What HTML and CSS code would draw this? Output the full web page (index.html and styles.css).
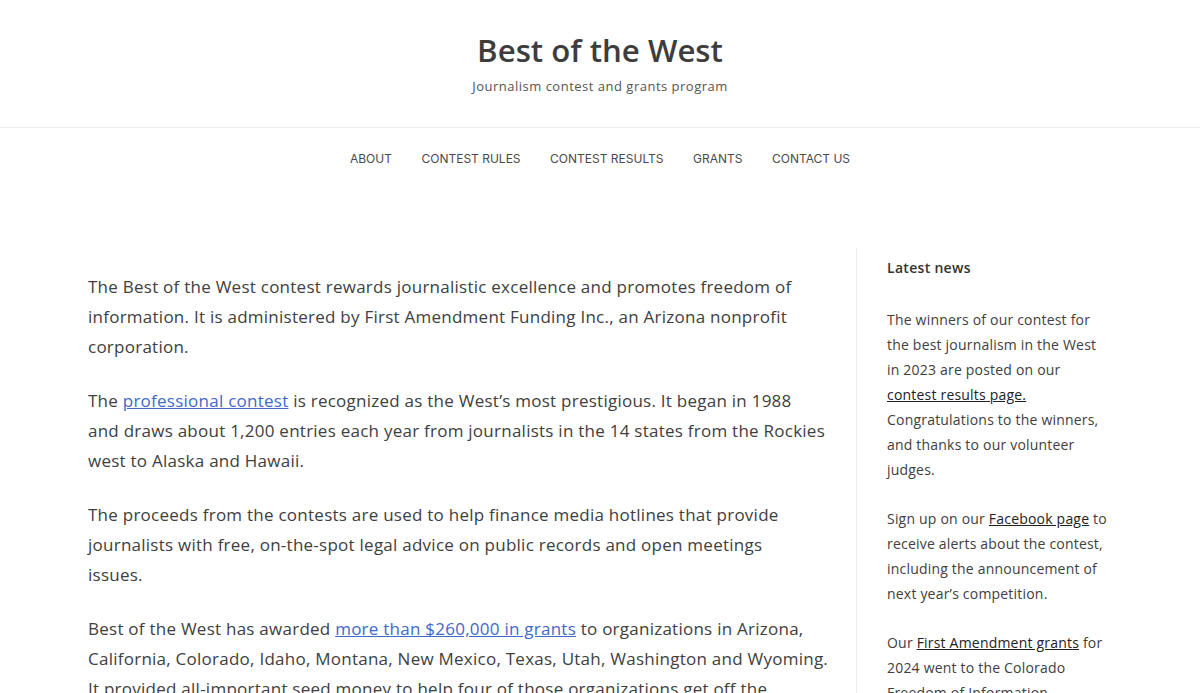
FILE: index.html
```html
<!DOCTYPE html>
<html lang="en">
<head>
<meta charset="utf-8">
<title>Best of the West</title>
<link rel="stylesheet" href="styles.css">
</head>
<body>
<header class="site-header">
  <h1 class="site-title">Best of the West</h1>
  <p class="site-tagline">Journalism contest and grants program</p>
</header>
<nav class="site-nav">
  <a href="#">About</a>
  <a href="#">Contest Rules</a>
  <a href="#">Contest Results</a>
  <a href="#">Grants</a>
  <a href="#">Contact Us</a>
</nav>
<div class="layout">
  <main class="content">
    <p>The Best of the West contest rewards journalistic excellence and promotes freedom of<br>information. It is administered by First Amendment Funding Inc., an Arizona nonprofit<br>corporation.</p>
    <p>The <a href="#">professional contest</a> is recognized as the West’s most prestigious. It began in 1988<br>and draws about 1,200 entries each year from journalists in the 14 states from the Rockies<br>west to Alaska and Hawaii.</p>
    <p>The proceeds from the contests are used to help finance media hotlines that provide<br>journalists with free, on-the-spot legal advice on public records and open meetings<br>issues.</p>
    <p>Best of the West has awarded <a href="#">more than $260,000 in grants</a> to organizations in Arizona,<br>California, Colorado, Idaho, Montana, New Mexico, Texas, Utah, Washington and Wyoming.<br>It provided all-important seed money to help four of those organizations get off the<br>ground.</p>
  </main>
  <aside class="sidebar">
    <h2 class="widget-title">Latest news</h2>
    <p>The winners of our contest for the best journalism in the West in 2023 are posted on our <a href="#">contest results page.</a> Congratulations to the winners, and thanks to our volunteer judges.</p>
    <p>Sign up on our <a href="#">Facebook page</a> to receive alerts about the contest, including the announcement of next year’s competition.</p>
    <p>Our <a href="#">First Amendment grants</a> for 2024 went to the Colorado Freedom of Information Coalition.</p>
  </aside>
</div>
</body>
</html>
```
FILE: styles.css
```css
html, body {
  margin: 0;
  padding: 0;
  background: #fff;
}
body {
  font-family: "Open Sans", "Liberation Sans", sans-serif;
  color: #404040;
}
.site-header {
  text-align: center;
  padding: 30px 0 32px;
  border-bottom: 1px solid #ebebeb;
}
.site-title {
  margin: 0;
  font-size: 31.2px;
  line-height: 40px;
  font-weight: 600;
  color: #3d3d3d;
}
.site-tagline {
  margin: 7px 0 0;
  font-size: 13px;
  line-height: 18px;
  color: #555;
  letter-spacing: 0.5px;
}
.site-nav {
  display: flex;
  justify-content: center;
  gap: 29.5px;
  padding: 22px 0 0;
  height: 50px;
}
.site-nav a {
  font-family: Inter, "Liberation Sans", sans-serif;
  font-size: 12px;
  line-height: 18px;
  text-transform: uppercase;
  color: #4a4a4a;
  text-decoration: none;
}
.layout {
  width: 1024px;
  margin: 48px auto 0;
  display: grid;
  grid-template-columns: 768px 256px;
}
.content {
  padding: 24px 18px 0 0;
}
.content p {
  margin: 0 0 24px;
  font-size: 17px;
  line-height: 30px;
  letter-spacing: 0.25px;
}
.content a {
  color: #4169c9;
}
.sidebar {
  border-left: 1px solid #ededed;
  padding: 10px 3px 0 30px;
}
.widget-title {
  margin: 0 0 29px;
  font-size: 14px;
  line-height: 20px;
  font-weight: 600;
  color: #333;
  letter-spacing: 0.3px;
}
.sidebar p {
  margin: 0 0 24px;
  font-size: 14px;
  line-height: 25px;
  letter-spacing: 0.2px;
}
.sidebar a {
  color: #222;
}
```
